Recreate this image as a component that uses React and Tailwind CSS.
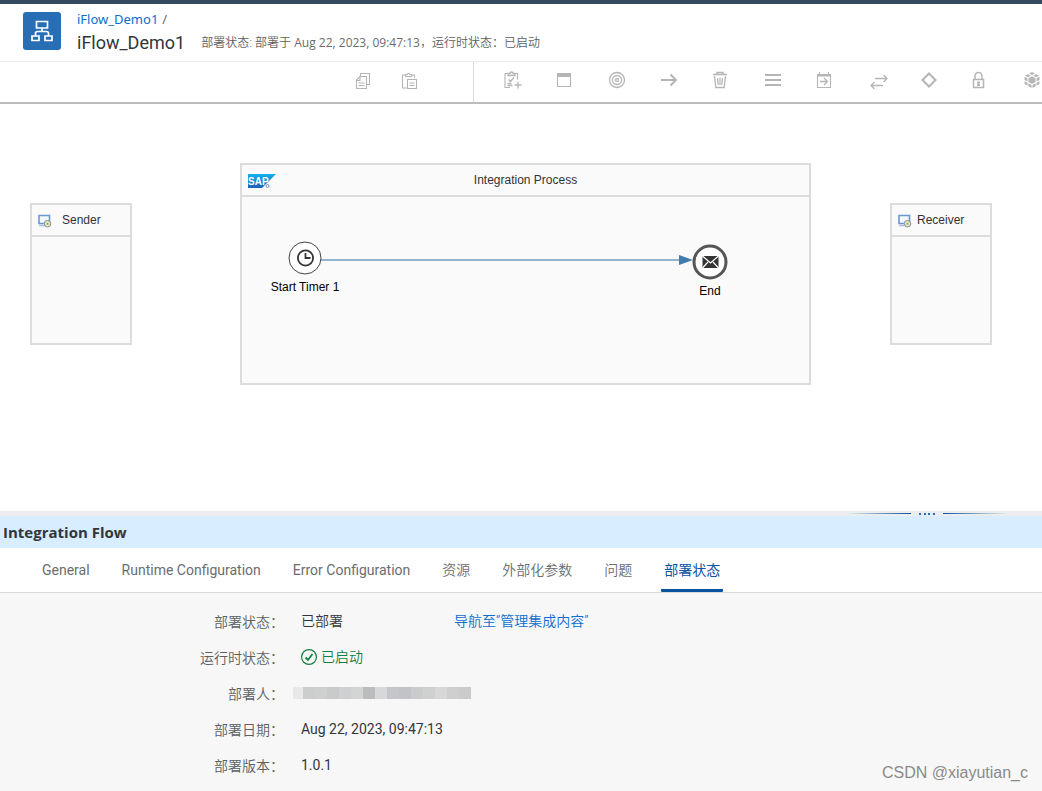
import React from "react";

const tools = [
  {
    label: "Add task",
    d: (
      <>
        <path d="M5.500 3.500H3v14h5M13 3.500h2.500v6" />
        <path d="M6 5.500v-2h2a1.500 1.500 0 0 1 3 0h2v2zM6.500 9.500l2 2 3.500-4M5.500 15.500h5M5.500 13.500h4M16 11.500v7M12.500 15h7" strokeWidth="1.300" />
      </>
    ),
  },
  {
    label: "Process",
    d: (
      <>
        <path d="M3.500 3.500h13v13h-13z" />
        <path d="M3 3h14v4H3z" fill="currentColor" stroke="none" />
      </>
    ),
  },
  {
    label: "Event",
    d: (
      <>
        <circle cx="11" cy="10" r="7.500" strokeWidth="1.300" />
        <circle cx="11" cy="10" r="4.500" strokeWidth="1.300" />
        <circle cx="11" cy="10" r="1.500" strokeWidth="1.300" />
      </>
    ),
  },
  { label: "Connector", d: <path d="M3 10h15M12.500 4.500L18 10l-5.500 5.500" strokeWidth="2" /> },
  {
    label: "Delete",
    d: <path d="M3 4.500h14M7 4V2.500h6V4M4.500 6l1.300 11.500h8.400L15.500 6M7.500 8l.7 7M10 8v7M12.500 8l-.7 7" strokeWidth="1.300" />,
  },
  { label: "Lanes", d: <path d="M3 5h16M3 10h16M3 15h16" strokeWidth="2" /> },
  {
    label: "Call",
    d: (
      <>
        <path d="M3.500 4.500h13v13h-13z" />
        <path d="M3 4h14v2.500H3zM5 2h1v2H5zM14 2h1v2h-1z" fill="currentColor" stroke="none" />
        <path d="M6 11.500h7.500M10 8l3.500 3.500L10 15" strokeWidth="1.300" />
      </>
    ),
  },
  {
    label: "Transform",
    d: <path d="M9 8.500h12M17.500 5L21 8.500 17.500 12M17 15.500H5M8.500 12L5 15.500 8.500 19" strokeWidth="1.300" />,
  },
  { label: "Routing", d: <path d="M11 3.500l6.500 6.500-6.500 6.500L4.500 10z" strokeWidth="2" /> },
  {
    label: "Security",
    d: (
      <>
        <path d="M5.500 9.500h10v8h-10zM7 9.500V6a3.500 3.500 0 0 1 7 0v3.500" strokeWidth="1.500" transform="translate(-2 0)" />
        <path d="M7 11.500h3v1.800h-.5v1.200h.5V16H7v-1.500h.5v-1.200H7z" fill="currentColor" stroke="none" />
      </>
    ),
  },
  {
    label: "More",
    d: (
      <g fill="currentColor" stroke="none">
        <path d="M10 2l3 1.500-3 1.600L7 3.500zM5.800 4.200L8.800 5.700 6 7.300 3 5.700zM14.200 4.200L17 5.700l-2.800 1.600-3-1.600z" />
        <path d="M10 6.300l3.500 2v3.700L10 14l-3.500-2V8.300z" />
        <path d="M2.500 6.800l3 1.500v3.200l-3-1.500zM17.500 6.800l-3 1.500v3.200l3-1.500zM2.500 11.200l3 1.500v3l-3-1.700zM17.500 11.200l-3 1.500v3l3-1.700zM6.300 13.200l3.200 1.800v3l-3.200-1.700zM13.700 13.200L10.500 15v3l3.200-1.700z" />
      </g>
    ),
  },
];

function ToolIcon({ children }) {
  return (
    <svg
      className="h-5 w-5 overflow-visible"
      viewBox="0 0 20 20"
      fill="none"
      stroke="currentColor"
      strokeWidth="1.1"
      aria-hidden="true"
    >
      {children}
    </svg>
  );
}

function Header() {
  return (
    <header className="flex h-[57px] items-start gap-4 pt-2 pl-[23px]">
      <div className="flex h-[38px] w-[38px] shrink-0 items-center justify-center rounded-[3px] bg-[#286eb4]">
        <svg className="h-[22px] w-[22px]" viewBox="0 0 22 22" fill="none" stroke="white" strokeWidth="1.7" aria-hidden="true">
          <path d="M5.500 1.500h11v6.500h-11zM11 8v3.500M4.500 16v-2.500q0-2 2-2h9q2 0 2 2V16M1 16h7v4.500H1zM14 16h7v4.500h-7z" />
        </svg>
      </div>
      <div>
        <nav className="flex h-[15px] items-center gap-1 font-['Noto_Sans',sans-serif] text-[13px] text-[#6a6d70]">
          <a href="#flow" className="text-[#0a6ed1]">iFlow_Demo1</a>
          <span>/</span>
        </nav>
        <div className="flex items-center gap-4">
          <h1 className="text-[18px] leading-8 text-[#32363a]">iFlow_Demo1</h1>
          <p className="font-['Open_Sans','Noto_Sans_CJK_SC',sans-serif] text-[12px] leading-4 font-[350] whitespace-nowrap text-[#5c5f62]">
            部署状态: 部署于 <span className="font-normal text-[#6a6d70]">Aug 22, 2023, 09:47:13</span>，运行时状态：已启动
          </p>
        </div>
      </div>
    </header>
  );
}

function Toolbar() {
  return (
    <div
      role="toolbar"
      aria-label="Flow editing"
      className="flex h-[43px] overflow-hidden border-t border-b-2 border-t-[#ebebeb] border-b-[#bcbcbc] text-[#b5b5b5]"
    >
      <div className="flex w-[474px] shrink-0 justify-end border-r border-[#d9d9d9] pr-10">
        <button type="button" aria-label="Copy" className="flex h-[38px] w-[47px] items-center justify-center">
          <ToolIcon>
            <path d="M7.500 5V2.500h9v11H14M3.500 9L7 5.500h6.500v12h-10zM3.500 9.500H7v-4M5.500 12h6M5.500 14.500h6" />
          </ToolIcon>
        </button>
        <button type="button" aria-label="Paste" className="flex h-[38px] w-[47px] items-center justify-center">
          <ToolIcon>
            <path d="M5 4H2.500v13h4M12 4h2.500v3M5.500 5.500V3.500h1.700a1.500 1.500 0 0 1 2.800 0h1.700v2zM7.500 8.500h9v9h-9zM9.500 12h5M9.500 14.500h5" />
          </ToolIcon>
        </button>
      </div>
      <div className="flex pl-3">
        {tools.map((t) => (
          <button key={t.label} type="button" aria-label={t.label} className="flex h-9 w-[52px] shrink-0 items-center justify-center">
            <ToolIcon>{t.d}</ToolIcon>
          </button>
        ))}
      </div>
    </div>
  );
}

function Participant({ name, className, gap }) {
  return (
    <section className={"absolute top-[99px] h-[142px] w-[102px] border-2 border-[#dcdcdc] bg-[#fafafa] " + className}>
      <div className={"flex h-8 items-center border-b-2 border-[#dcdcdc] pl-[5px] " + gap}>
        <svg className="h-[15px] w-[15px]" viewBox="0 0 15 15" aria-hidden="true">
          <path d="M2 2.500h10.500v8H2z" fill="#f3f8fd" stroke="#6c97cf" strokeWidth="1.600" />
          <path d="M2 12.500h5" stroke="#a9bfda" strokeWidth="1.600" />
          <circle cx="10.500" cy="10.700" r="3.300" fill="#e2df9a" stroke="#8495aa" />
          <path d="M8.500 10.700h4M10.500 8.700v4" stroke="#fafad8" />
          <circle cx="10.500" cy="10.700" r="1" fill="#7893a2" />
        </svg>
        <h2>{name}</h2>
      </div>
    </section>
  );
}

function Canvas() {
  return (
    <main className="relative h-[407px] overflow-hidden bg-white font-['Liberation_Sans',sans-serif] text-[12px] leading-4 text-[#333]">
      <Participant name="Sender" className="left-[30px]" gap="gap-[10px]" />
      <section className="absolute top-[59px] left-[240px] h-[222px] w-[571px] border-2 border-[#dcdcdc] bg-[#fafafa]">
        <div className="relative flex h-[32px] items-center justify-center border-b-2 border-[#dcdcdc]">
          <svg className="absolute top-[9px] left-[5px] h-[15px] w-[30px]" viewBox="0 0 30 15" aria-label="SAP">
            <defs>
              <linearGradient id="brand" x2="0" y2="1">
                <stop stopColor="#12b2ec" />
                <stop offset="1" stopColor="#1b61bd" />
              </linearGradient>
            </defs>
            <path d="M1 0h28L15 14H1z" fill="url(#brand)" />
            <text x="1" y="10.500" fill="white" fontFamily="Liberation Sans" fontWeight="700" fontSize="10">SAP</text>
            <circle cx="20.500" cy="12" r="1.500" fill="none" stroke="#4381c9" strokeWidth=".8" />
          </svg>
          <h2>Integration Process</h2>
        </div>
        <svg className="absolute top-[32px] left-0 h-[160px] w-[567px]" viewBox="242 197 567 160" aria-hidden="true">
          <path d="M321 260h360" stroke="#91b4d2" strokeWidth="2" />
          <path d="M679 255l14 5-14 5z" fill="#427cac" />
          <circle cx="305" cy="258" r="16" fill="white" stroke="#444" />
          <circle cx="305.500" cy="258" r="7.600" fill="none" stroke="#333" strokeWidth="1.800" />
          <path d="M305.500 253v5h5" fill="none" stroke="#333" strokeWidth="1.800" />
          <circle cx="710" cy="262" r="16" fill="white" stroke="#555" strokeWidth="3" />
          <path d="M702.500 256h16v12h-16z" fill="#333" />
          <path d="M702.500 256l8 7 8-7M702.500 268l5.500-6M718.500 268l-5.500-6" fill="none" stroke="white" strokeWidth="1.200" />
        </svg>
        <p className="absolute top-[114px] left-[13px] w-[100px] text-center text-black">Start Timer 1</p>
        <p className="absolute top-[118px] left-[418px] w-[100px] text-center text-black">End</p>
      </section>
      <Participant name="Receiver" className="left-[890px]" gap="gap-[5px]" />
    </main>
  );
}

function Splitter() {
  return (
    <div role="separator" className="flex h-[5px] items-center justify-end gap-2 bg-[#ebedee] pr-[35px]">
      <span className="h-px w-[64px] bg-linear-to-r from-transparent to-[#0854a0]" />
      <span className="flex w-4 justify-between">
        {[0, 1, 2, 3].map((i) => (
          <i key={i} className="h-[2px] w-[2px] bg-[#286eb4]" />
        ))}
      </span>
      <span className="h-px w-[64px] bg-linear-to-l from-transparent to-[#0854a0]" />
    </div>
  );
}

const tabs = [
  { name: "General", weight: "font-normal" },
  { name: "Runtime Configuration", weight: "font-normal" },
  { name: "Error Configuration", weight: "font-normal" },
  { name: "资源", weight: "font-[350]" },
  { name: "外部化参数", weight: "font-[350]" },
  { name: "问题", weight: "font-[350]" },
  { name: "部署状态", weight: "font-normal", active: true },
];

const mosaic = [
  "w-[10px] bg-[#e8e8e8]", "w-3 bg-[#cccdcd]", "w-3 bg-[#cecfcf]", "w-3 bg-[#c9cacc]", "w-3 bg-[#cfd0d2]",
  "w-3 bg-[#d3d4d4]", "w-3 bg-[#bbbcbe]", "w-3 bg-[#d7d8da]", "w-3 bg-[#c5c6ca]", "w-3 bg-[#c2c3c7]",
  "w-3 bg-[#cacbcd]", "w-3 bg-[#cfd0d0]", "w-3 bg-[#d7d7d7]", "w-3 bg-[#cfcfcf]", "w-3 bg-[#cbcbcb]",
];

function Row({ label, children }) {
  return (
    <div className="flex h-9 items-center">
      <dt className="w-[284px] shrink-0 text-right text-[#5c5f62]">{label}</dt>
      <dd className="flex items-center pb-[2px] pl-[17px] text-[#32363a]">{children}</dd>
    </div>
  );
}

export default function App() {
  return (
    <div className="flex min-h-screen flex-col overflow-hidden bg-white font-[Roboto,'Noto_Sans_CJK_SC',sans-serif] text-[14px]">
      <div className="h-1 bg-[#354a5f]" />
      <Header />
      <Toolbar />
      <Canvas />
      <Splitter />
      <h2 className="h-8 bg-[#d8edff] pl-[3px] font-['Open_Sans',sans-serif] text-[15px] leading-8 font-bold text-[#32363a]">
        Integration Flow
      </h2>
      <div role="tablist" className="flex h-[45px] gap-[26px] border-b border-[#d9d9d9] pl-[39px] text-[#6a6d70]">
        {tabs.map((t) => (
          <button
            key={t.name}
            type="button"
            role="tab"
            aria-selected={Boolean(t.active)}
            className={
              "border-b-3 px-[3px] pt-[3px] whitespace-nowrap " +
              t.weight +
              (t.active ? " rounded-b-[1px] border-[#0854a0] text-[#0854a0]" : " border-transparent")
            }
          >
            {t.name}
          </button>
        ))}
      </div>
      <section className="relative grow bg-[#f7f7f7] pt-[11px]">
        <dl className="leading-5 font-[350]">
          <Row label="部署状态：">
            <span className="w-[153px]">已部署</span>
            <a href="#manage" className="text-[#0a6ed1]">导航至“管理集成内容”</a>
          </Row>
          <Row label="运行时状态：">
            <span className="flex items-center gap-1 text-[#107e3e]">
              <svg className="h-4 w-4" viewBox="0 0 16 16" fill="none" stroke="currentColor" aria-hidden="true">
                <circle cx="8" cy="8" r="7.400" strokeWidth="1.200" />
                <path d="M4.500 8.500L7 11l4.500-6" strokeWidth="1.800" />
              </svg>
              已启动
            </span>
          </Row>
          <Row label="部署人：">
            <span className="-ml-2 flex">
              {mosaic.map((c, i) => (
                <i key={i} className={"h-3 " + c} />
              ))}
            </span>
          </Row>
          <Row label="部署日期：">
            <span className="font-normal">Aug 22, 2023, 09:47:13</span>
          </Row>
          <Row label="部署版本：">
            <span className="font-normal">1.0.1</span>
          </Row>
        </dl>
        <p className="absolute right-[14px] bottom-2 font-['Liberation_Sans',sans-serif] text-[16px] leading-5 text-[#8a8a8a]">
          CSDN @xiayutian_c
        </p>
      </section>
    </div>
  );
}
